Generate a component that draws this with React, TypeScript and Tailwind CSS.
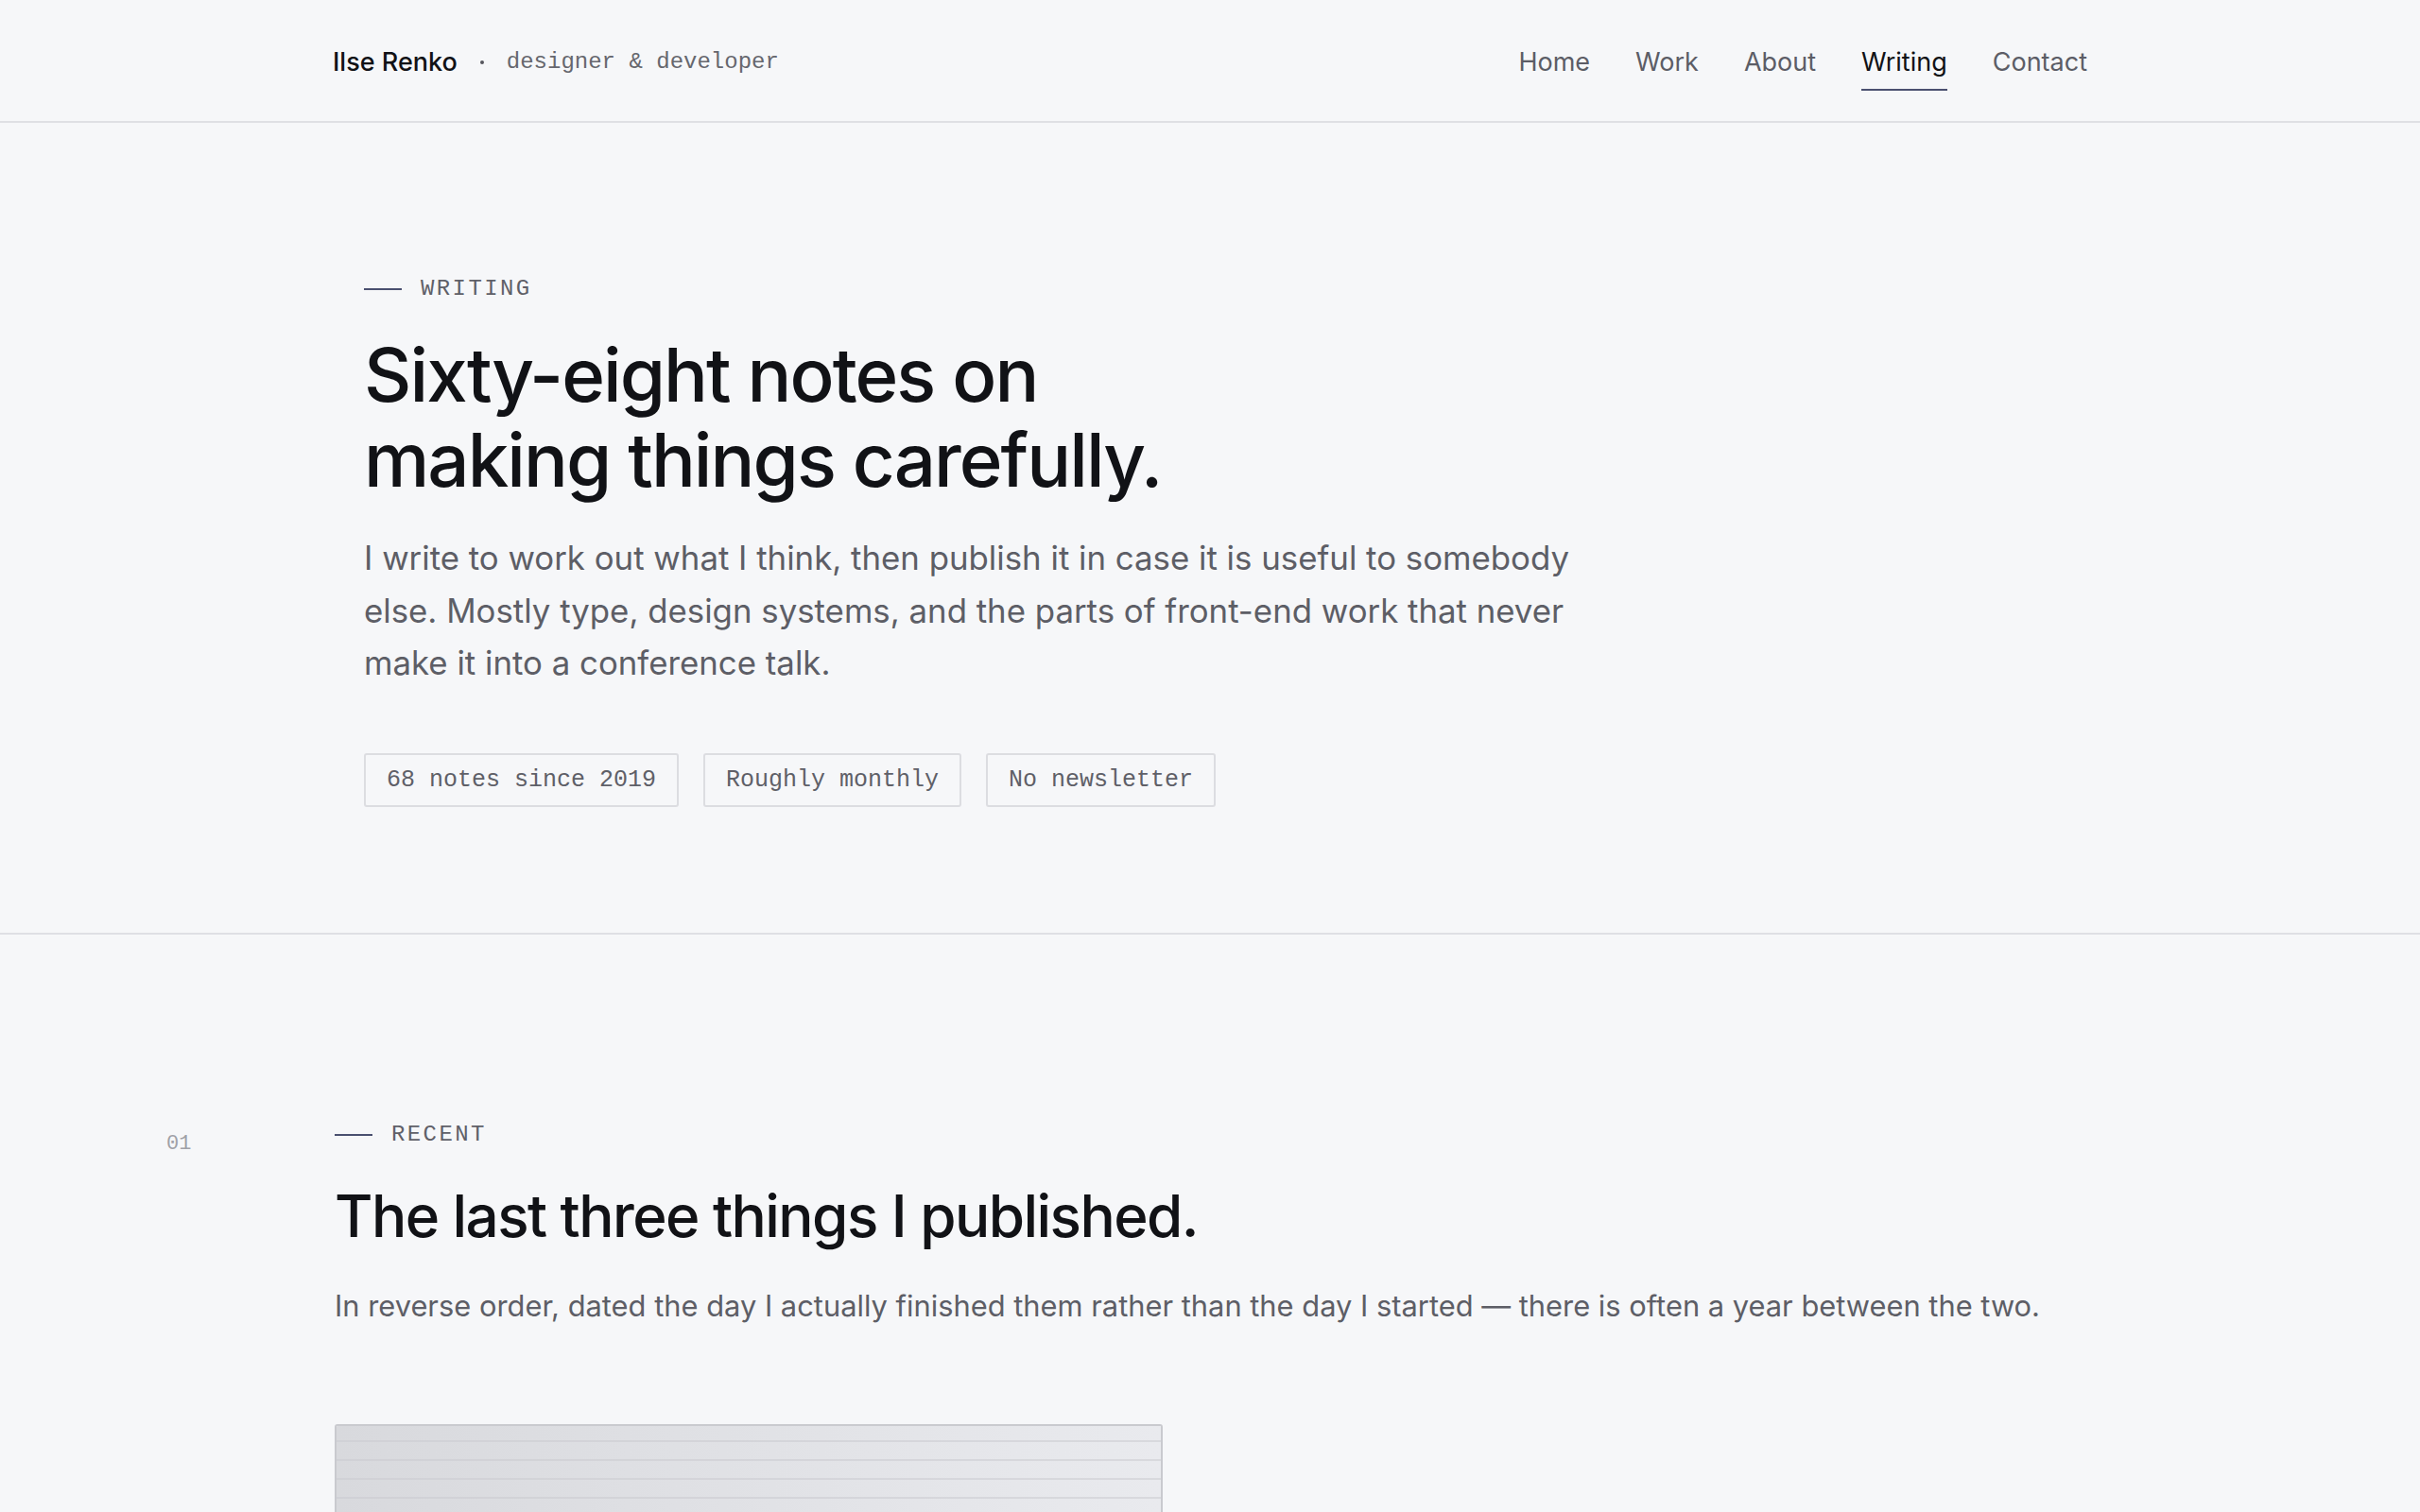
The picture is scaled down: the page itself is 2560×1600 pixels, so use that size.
import React from "react";

const sans = "font-['Inter','Noto_Sans',sans-serif]";
const mono = "font-['Liberation_Mono','DejaVu_Sans_Mono',monospace]";

function Label({ text }: { text: string }) {
  return (
    <div className="flex items-center gap-[20px]">
      <span className="block w-[40px] h-[2px] bg-[#4a5070]" />
      <span className={`${mono} text-[24px] leading-[32px] tracking-[0.1em] text-[#5f6068]`}>{text}</span>
    </div>
  );
}

function Tag({ text }: { text: string }) {
  return (
    <div className={`${mono} h-[57px] flex items-center px-[22px] border-2 border-[#dcdde1] rounded-[3px] text-[25px] text-[#5f6068]`}>
      {text}
    </div>
  );
}

const nav = ["Home", "Work", "About", "Writing", "Contact"];

export default function App() {
  return (
    <div className={`${sans} min-h-screen bg-[#f6f7f9] text-[#111216]`}>
      <header className="h-[130px] border-b-2 border-[#dfe0e4]">
        <div className="max-w-[1856px] mx-auto h-full pt-[4px] flex items-center justify-between">
          <div className="flex items-center">
            <span className="text-[27px] leading-[32px] font-medium text-[#111216]">Ilse Renko</span>
            <span className="block w-[4px] h-[4px] rounded-full bg-[#55565e] ml-[24px] mr-[24px]" />
            <span className={`${mono} text-[24px] leading-[32px] text-[#66676e]`}>designer &amp; developer</span>
          </div>
          <nav className="flex items-center gap-[48px]">
            {nav.map((n) => (
              <a
                key={n}
                className={`relative text-[27px] leading-[32px] ${n === "Writing" ? "text-[#111216]" : "text-[#5c5d66]"}`}
              >
                {n}
                {n === "Writing" && (
                  <span className="absolute left-0 right-0 top-full mt-[12px] h-[2px] bg-[#4a5070]" />
                )}
              </a>
            ))}
          </nav>
        </div>
      </header>

      <section className="border-b-2 border-[#dfe0e4]">
        <div className="max-w-[1856px] mx-auto pl-[33px] pt-[160px] pb-[133px]">
          <Label text="WRITING" />
          <h1 className="mt-[30px] text-[78px] leading-[1.15] font-medium tracking-[-0.025em] text-[#111216]">
            Sixty-eight notes on
            <br />
            making things carefully.
          </h1>
          <p className="mt-[32px] max-w-[1320px] text-[34.8px] leading-[55.5px] text-[#5d5e66]">
            I write to work out what I think, then publish it in case it is useful to somebody else. Mostly type, design
            systems, and the parts of front-end work that never make it into a conference talk.
          </p>
          <div className="mt-[67px] flex gap-[26px]">
            <Tag text="68 notes since 2019" />
            <Tag text="Roughly monthly" />
            <Tag text="No newsletter" />
          </div>
        </div>
      </section>

      <section>
        <div className="max-w-[2208px] mx-auto grid grid-cols-[178px_1fr] pt-[196px] pb-[120px]">
          <div className={`${mono} pt-[10px] text-[22px] leading-[32px] text-[#a0a1a7]`}>01</div>
          <div>
            <Label text="RECENT" />
            <h2 className="mt-[34px] text-[62px] leading-[1.15] font-medium tracking-[-0.025em] text-[#111216]">
              The last three things I published.
            </h2>
            <p className="mt-[34px] text-[30.85px] leading-[51px] text-[#5d5e66]">
              In reverse order, dated the day I actually finished them rather than the day I started — there is often a
              year between the two.
            </p>
            <div className="mt-[100px] w-[876px] h-[520px] border-2 border-[#c9cacf] rounded-[3px] overflow-hidden">
              <svg width="100%" height="100%" viewBox="0 0 872 516" preserveAspectRatio="none">
                <defs>
                  <linearGradient id="cardg" x1="0" y1="0" x2="1" y2="0">
                    <stop offset="0" stopColor="#d8d9dd" />
                    <stop offset="1" stopColor="#e9eaee" />
                  </linearGradient>
                  <pattern id="lines" x="0" y="0" width="872" height="20" patternUnits="userSpaceOnUse">
                    <rect x="0" y="15" width="872" height="2" fill="#c9cacf" opacity="0.55" />
                  </pattern>
                </defs>
                <rect width="872" height="516" fill="url(#cardg)" />
                <rect width="872" height="516" fill="url(#lines)" />
              </svg>
            </div>
          </div>
        </div>
      </section>
    </div>
  );
}
